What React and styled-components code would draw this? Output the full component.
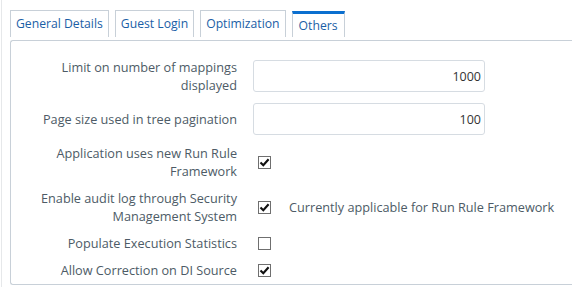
import styled, { createGlobalStyle, css } from "styled-components";

const GlobalStyle = createGlobalStyle`
  html, body {
    margin: 0;
    padding: 0;
    background: #fff;
    overflow: hidden;
  }
  body {
    font-family: "Open Sans", "Noto Sans", sans-serif;
  }
`;

const tabs = ["General Details", "Guest Login", "Optimization", "Others"];

const fields = [
  { label: "Limit on number of mappings displayed", type: "text", value: "1000" },
  { label: "Page size used in tree pagination", type: "text", value: "100" },
  { label: "Application uses new Run Rule Framework", type: "check", checked: true },
  {
    label: "Enable audit log through Security Management System",
    type: "check",
    checked: true,
    note: "Currently applicable for Run Rule Framework",
  },
  { label: "Populate Execution Statistics", type: "check", checked: false },
  { label: "Allow Correction on DI Source", type: "check", checked: true },
];

function Check({ checked }) {
  return (
    <Box>
      {checked && (
        <svg width="11" height="11" viewBox="0 0 11 11">
          <path d="M1.5 5.5 L4.3 8.3 L9.6 2.2" fill="none" stroke="#111" strokeWidth="2.1" />
        </svg>
      )}
    </Box>
  );
}

function App() {
  return (
    <>
      <GlobalStyle />
      <Frame>
        <TabBar>
          {tabs.map((t) => (
            <Tab key={t} $active={t === "Others"}>
              {t}
            </Tab>
          ))}
        </TabBar>
        <Panel>
          {fields.map((f) => (
            <Row key={f.label}>
              <Label>{f.label}</Label>
              {f.type === "text" ? (
                <Input defaultValue={f.value} />
              ) : (
                <CheckCell>
                  <Check checked={f.checked} />
                  {f.note && <Note>{f.note}</Note>}
                </CheckCell>
              )}
            </Row>
          ))}
        </Panel>
      </Frame>
    </>
  );
}

const Frame = styled.div`
  margin-left: 1px;
  height: 287px;
  border-left: 1px solid #e6e8ea;
  padding: 10px 0 0 8px;
  box-sizing: border-box;
`;

const TabBar = styled.div`
  display: flex;
  align-items: flex-end;
  gap: 6px;
  height: 27px;
`;

const Tab = styled.div`
  box-sizing: border-box;
  height: 27px;
  padding: 0 5px;
  border: 1px solid #c8d0d8;
  border-bottom: none;
  font-size: 12.2px;
  line-height: 25px;
  color: #1a5ea6;
  white-space: nowrap;
  ${(p) =>
    p.$active &&
    css`
      height: 26px;
      padding: 0 6px;
      border-top: 3px solid #0b6fcf;
      line-height: 24px;
    `}
`;

const Panel = styled.div`
  margin-top: 3px;
  width: 640px;
  box-sizing: border-box;
  border: 1px solid #c8d0d8;
  border-right: none;
  border-radius: 3px 0 0 3px;
  padding: 17px 0 5px;
  display: flex;
  flex-direction: column;
  gap: 9px;
`;

const Row = styled.div`
  display: grid;
  grid-template-columns: 226px 1fr;
  column-gap: 16px;
  align-items: center;
  min-height: 18px;
`;

const Label = styled.div`
  box-sizing: border-box;
  padding-left: 24px;
  text-align: right;
  font-size: 12.7px;
  line-height: 18px;
  color: #4d5b66;
`;

const Input = styled.input`
  box-sizing: border-box;
  width: 232px;
  height: 32px;
  border: 1px solid #d6dce2;
  border-radius: 3px;
  padding: 0 3px;
  text-align: right;
  font-family: inherit;
  font-size: 12.5px;
  color: #333;
  outline: none;
`;

const CheckCell = styled.div`
  display: flex;
  align-items: center;
  gap: 18px;
  padding-left: 5px;
  font-size: 12.7px;
  line-height: 18px;
`;

const Box = styled.span`
  box-sizing: border-box;
  width: 13px;
  height: 13px;
  border: 1px solid #6f6f6f;
  background: #fff;
  display: inline-flex;
  align-items: center;
  justify-content: center;
`;

const Note = styled.span`
  color: #4d5b66;
`;

export default App;
